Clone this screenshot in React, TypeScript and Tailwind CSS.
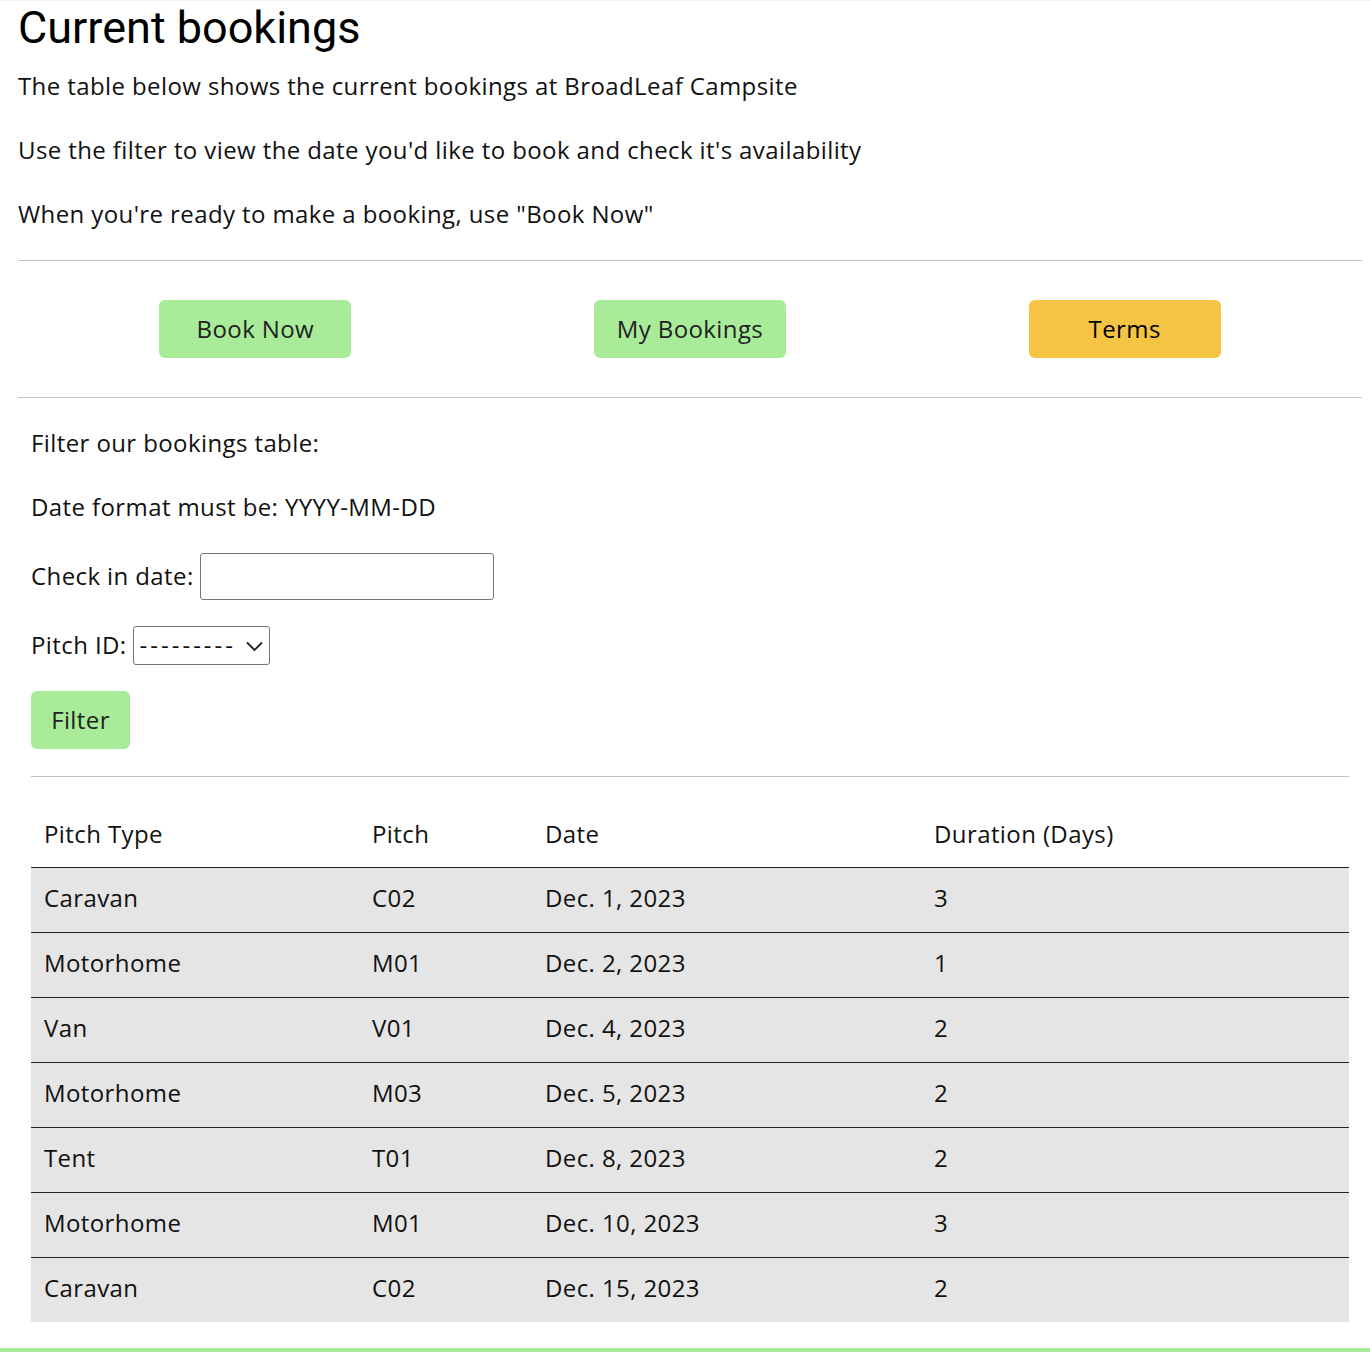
import React from "react"

const bookings = [
  { type: "Caravan", pitch: "C02", date: "Dec. 1, 2023", days: 3 },
  { type: "Motorhome", pitch: "M01", date: "Dec. 2, 2023", days: 1 },
  { type: "Van", pitch: "V01", date: "Dec. 4, 2023", days: 2 },
  { type: "Motorhome", pitch: "M03", date: "Dec. 5, 2023", days: 2 },
  { type: "Tent", pitch: "T01", date: "Dec. 8, 2023", days: 2 },
  { type: "Motorhome", pitch: "M01", date: "Dec. 10, 2023", days: 3 },
  { type: "Caravan", pitch: "C02", date: "Dec. 15, 2023", days: 2 },
]

const App = () => {
  return (
    <div className="min-h-[1352px] bg-white border-t border-gray-100 font-['Open_Sans',sans-serif] tracking-[0.4px] text-[#111] flex flex-col">
      <main className="pl-[18px] pr-[8px] flex-1">
        <h1 className="font-['Roboto',sans-serif] text-[45px] leading-[54px] font-normal tracking-normal text-black">
          Current bookings
        </h1>
        <div className="mt-[13px] text-[24px] leading-9">
          <p className="mb-7">The table below shows the current bookings at BroadLeaf Campsite</p>
          <p className="mb-7">Use the filter to view the date you'd like to book and check it's availability</p>
          <p className="mb-7">When you're ready to make a booking, use "Book Now"</p>
        </div>

        <hr className="border-t border-[#c4c4c4]" />
        <div className="grid grid-cols-3 px-[20px] py-[39px]">
          <div className="flex justify-center">
            <button className="w-[192px] h-[58px] rounded-md bg-[#a8ec9a] text-[24px] text-[#222]">Book Now</button>
          </div>
          <div className="flex justify-center">
            <button className="w-[192px] h-[58px] rounded-md bg-[#a8ec9a] text-[24px] text-[#222]">My Bookings</button>
          </div>
          <div className="flex justify-center">
            <button className="w-[192px] h-[58px] rounded-md bg-[#f5c445] text-[24px] text-black">Terms</button>
          </div>
        </div>
        <hr className="border-t border-[#c4c4c4]" />

        <section className="px-[13px] pt-[27px] text-[24px] leading-9">
          <p className="mb-7">Filter our bookings table:</p>
          <p className="mb-7">Date format must be: YYYY-MM-DD</p>
          <form className="flex flex-col -mt-[1px]">
            <div className="flex items-center gap-[6px] h-[48px]">
              <label>Check in date:</label>
              <input type="text" className="w-[294px] h-[47px] border border-[#767676] rounded-[3px] px-2" />
            </div>
            <div className="flex items-center gap-[6px] h-[40px] mt-[25px]">
              <label>Pitch ID:</label>
              <div className="relative">
                <select className="appearance-none w-[137px] h-[39px] border border-[#767676] rounded-[3px] pl-[6px] text-[24px] tracking-[3px] leading-none bg-white">
                  <option>---------</option>
                </select>
                <svg className="absolute right-[7px] top-[14px] pointer-events-none" width="17" height="12" viewBox="0 0 17 12" fill="none">
                  <path d="M1 2.5 L8.5 10 L16 2.5" stroke="#222" strokeWidth="1.8" />
                </svg>
              </div>
            </div>
            <div className="mt-[26px]">
              <button type="button" className="w-[99px] h-[58px] rounded-md bg-[#a8ec9a] text-[24px] text-[#222]">Filter</button>
            </div>
          </form>
          <hr className="mt-[27px] border-t border-[#c4c4c4]" />

          <table className="mt-[25px] w-[1318px] border-collapse text-left text-[24px]">
            <thead>
              <tr className="h-[65px] border-b border-[#222]">
                <th className="w-[328px] pl-[13px] pb-[1px] font-normal">Pitch Type</th>
                <th className="w-[173px] pl-[13px] pb-[1px] font-normal">Pitch</th>
                <th className="w-[389px] pl-[13px] pb-[1px] font-normal">Date</th>
                <th className="pl-[13px] pb-[1px] font-normal">Duration (Days)</th>
              </tr>
            </thead>
            <tbody>
              {bookings.map((b, i) => (
                <tr key={i} className="h-[65px] bg-[#e5e5e5] border-b border-[#222] last:border-b-0">
                  <td className="pl-[13px] pb-[3px]">{b.type}</td>
                  <td className="pl-[13px] pb-[3px]">{b.pitch}</td>
                  <td className="pl-[13px] pb-[3px]">{b.date}</td>
                  <td className="pl-[13px] pb-[3px]">{b.days}</td>
                </tr>
              ))}
            </tbody>
          </table>
        </section>
      </main>
      <footer className="mt-[26px] h-[40px] bg-[#a8ec9a]" />
    </div>
  )
}

export default App
